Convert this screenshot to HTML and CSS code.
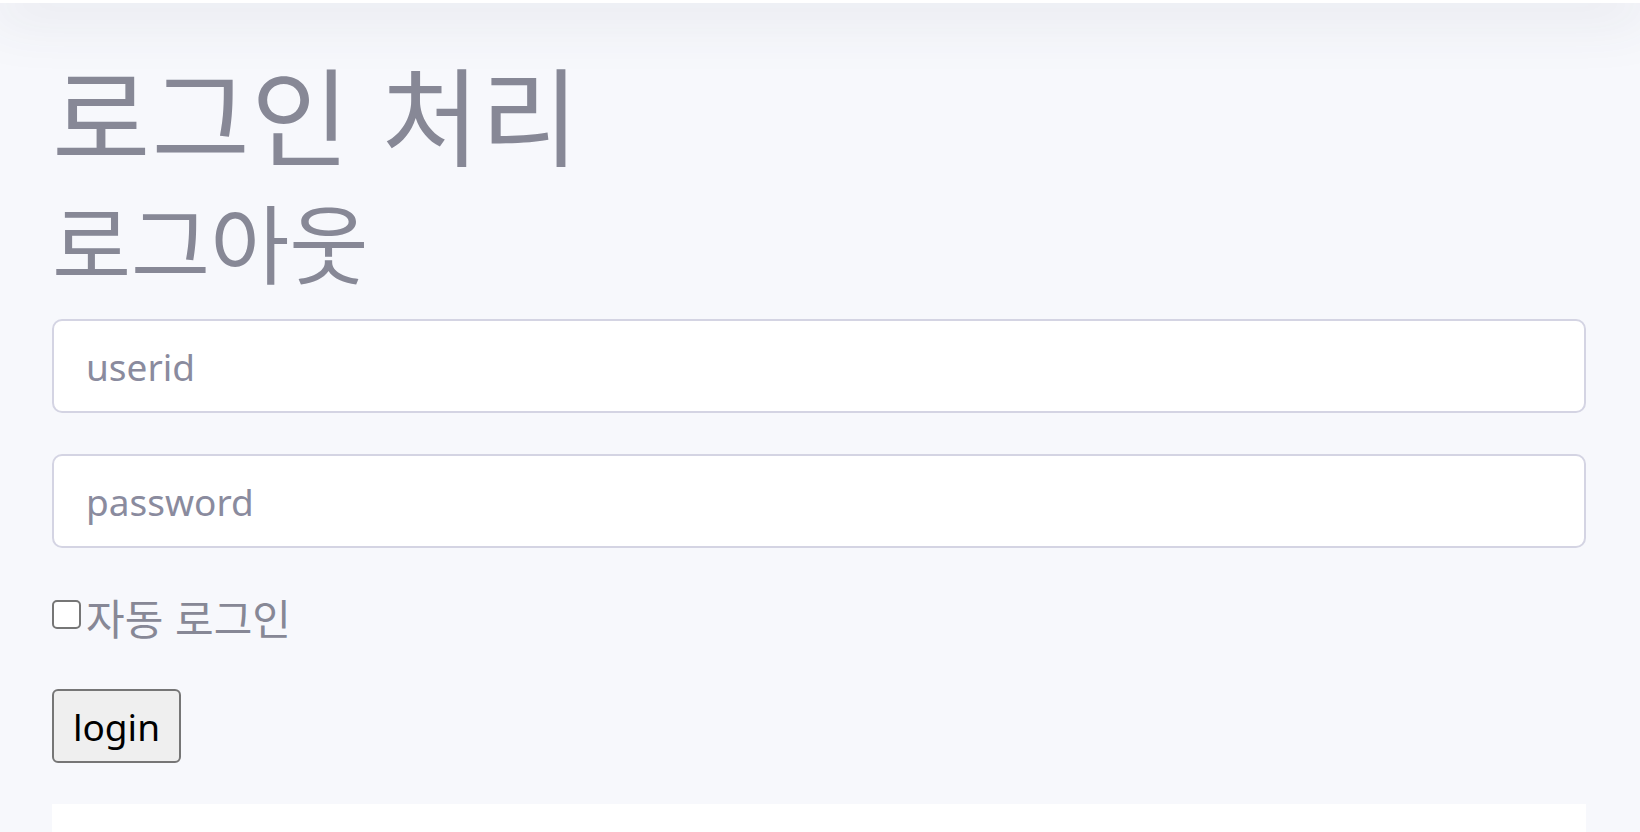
FILE: index.html
```html
<!DOCTYPE html>
<html lang="ko">
<head>
<meta charset="utf-8">
<title>로그인 처리</title>
<link rel="stylesheet" href="styles.css">
</head>
<body>
<div class="topbar"></div>
<main class="page">
  <h1 class="title">로그인 처리</h1>
  <h2 class="subtitle">로그아웃</h2>
  <form class="login-form">
    <input class="field" type="text" placeholder="userid">
    <input class="field" type="password" placeholder="password">
    <label class="remember"><input class="check" type="checkbox"><span>자동 로그인</span></label>
    <div class="actions"><button class="btn" type="button">login</button></div>
  </form>
  <div class="panel"></div>
</main>
</body>
</html>
```
FILE: styles.css
```css
html, body {
  margin: 0;
  padding: 0;
}
body {
  background: #f7f8fc;
  font-family: "Noto Sans", "Noto Sans CJK KR", sans-serif;
  color: #878896;
  overflow: hidden;
  height: 832px;
}
.topbar {
  height: 3px;
  background: #ffffff;
  box-shadow: 0 0 60px 8px rgba(60, 64, 90, 0.18);
}
.page {
  padding: 0 54px 0 52px;
  display: flex;
  flex-direction: column;
}
.title {
  margin: 49px 0 0 0;
  font-family: "Noto Sans CJK KR", sans-serif;
  font-weight: 400;
  font-size: 107px;
  line-height: 120px;
  letter-spacing: 1px;
  color: #878896;
}
.subtitle {
  margin: 21px 0 0 0;
  font-family: "Noto Sans CJK KR", sans-serif;
  font-weight: 400;
  font-size: 86px;
  line-height: 96px;
  color: #878896;
}
.login-form {
  display: flex;
  flex-direction: column;
  margin-top: 30px;
}
.field {
  box-sizing: border-box;
  height: 94px;
  width: 100%;
  margin: 0 0 41px 0;
  padding: 0 32px;
  border: 2px solid #d4d4e3;
  border-radius: 10px;
  background: #ffffff;
  font-family: "Noto Sans", sans-serif;
  font-size: 37px;
  color: #878896;
  outline: none;
}
.field::placeholder {
  color: #8a8b9e;
}
.login-form .field + .field {
  margin-bottom: 44px;
}
.remember {
  display: flex;
  align-items: center;
  height: 48px;
  font-family: "Noto Sans CJK KR", sans-serif;
  font-size: 42px;
  color: #878896;
}
.check {
  appearance: none;
  -webkit-appearance: none;
  box-sizing: border-box;
  width: 29px;
  height: 29px;
  margin: -3px 5px 0 0;
  border: 2px solid #767676;
  border-radius: 5px;
  background: #ffffff;
}
.actions {
  margin-top: 49px;
}
.btn {
  box-sizing: border-box;
  width: 129px;
  height: 74px;
  padding: 0;
  border: 2px solid #767676;
  border-radius: 6px;
  background: #efefef;
  font-family: "Noto Sans", sans-serif;
  font-size: 37px;
  color: #000000;
}
.panel {
  margin-top: 41px;
  height: 60px;
  background: #ffffff;
}
```
